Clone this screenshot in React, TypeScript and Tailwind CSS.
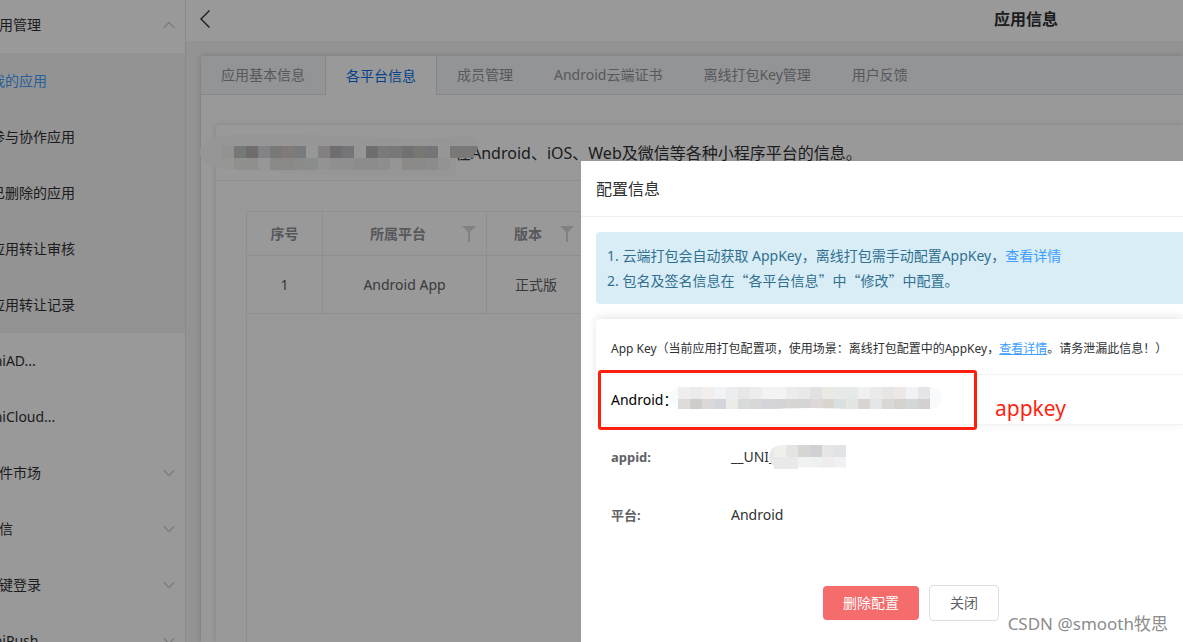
import { ChevronDown, ChevronUp } from "lucide-react"

const subItems = ["我的应用", "参与协作应用", "已删除的应用", "应用转让审核", "应用转让记录"]

const menuItems = [
  { label: "uniAD...", arrow: false },
  { label: "uniCloud...", arrow: false },
  { label: "插件市场", arrow: true },
  { label: "短信", arrow: true },
  { label: "一键登录", arrow: true },
  { label: "uniPush", arrow: true },
]

const tabs = ["应用基本信息", "各平台信息", "成员管理", "Android云端证书", "离线打包Key管理", "用户反馈"]

const nameTop = ["#f4f4f0", "#c2c8c6", "#b9b6b3", "#d8dbe0", "#c8c8c6", "#d6ccc8", "#c6ced3", "#fafcfc", "#dcd6d6", "#b8b8bc", "#c4c4c8", "#fafafa", "#b8b8bc", "#ccccce", "#c8c8c5", "#bcbcc0", "#c8c6c0", "#c0c3c6", "#fafafa", "#ccc8c6", "#c8c8c5"]
const nameBottom = ["#fafaf9", "#f0f0ee", "#eeeeec", "#fafafa", "#e4e4e2", "#e6e5e3", "#e8e9e6", "#e8eae9", "#f6f6f6", "#eeeeee", "#eeeeee", "#e9e9e9", "#e9eae8", "#eceeee", "#f8f8f8", "#e8e7e5", "#e6e7e5", "#eaeaea", "#f5f5f5"]

const keyTop = ["#efedee", "#ecebec", "#f2eeeb", "#f1f3f6", "#ecedee", "#e7e8e6", "#ebeeec", "#f4f3f2", "#f4f3f3", "#ececed", "#e9e9eb", "#e3e0e1", "#ebe9e3", "#e5e9e8", "#e5e9e8", "#f0f0f0", "#e9ebea", "#e7e6e4", "#ede8e6", "#f0f2f5", "#e5e5e8"]
const keyBottom = ["#dedcdb", "#cfcccb", "#dcdad8", "#d4d4dc", "#ebebe8", "#d8dbd9", "#d8d8d8", "#d4d5d8", "#d4d4d6", "#d7d6d3", "#d5d5d8", "#dfd8da", "#d8d6cf", "#dae0e0", "#e4e6e2", "#d7d6d2", "#e5e6e9", "#d9d8d4", "#d4d2ce", "#d5d6d8", "#d2d0d1"]

const idTop = ["#f0f0ec", "#e4e5e3", "#d6d6d5", "#d0d1d2", "#e6e6e7", "#e2e3e6"]
const idBottom = ["#e9e9e9", "#e9e9e9", "#f0f1f1", "#eff0f0", "#eeecec", "#f0f1f4"]

const Mosaic = ({ rows, x, y }: { rows: string[][]; x: number; y: number }) => (
  <>
    {rows.map((row, r) =>
      row.map((fill, i) => <rect key={`${r}-${i}`} x={x + i * 12} y={y + r * 12} width="12" height="12" fill={fill} />)
    )}
  </>
)

const FilterIcon = () => (
  <svg viewBox="0 0 14 16" className="h-4 w-3.5" fill="#d8d8d8">
    <path d="M0 0h14L8 6v10H6V6z" />
  </svg>
)

const Sidebar = () => (
  <aside className="-mt-[3px] -ml-[35px] w-[221px] shrink-0 border-r border-[#e6e6e6] bg-white text-sm text-[#303133]">
    <div className="flex h-14 items-center justify-between pr-1.5 pl-5">
      应用管理
      <ChevronUp className="size-5 text-[#a0a3a9]" strokeWidth={1.2} />
    </div>
    <nav className="bg-[#f5f5f5]">
      {subItems.map((item, i) => (
        <a key={item} href="#" className={`flex h-14 items-center pl-[26px] ${i === 0 ? "text-[#409eff]" : ""}`}>
          {item}
        </a>
      ))}
    </nav>
    {menuItems.map((item) => (
      <div key={item.label} className="flex h-14 items-center justify-between pr-1.5 pl-5">
        {item.label}
        {item.arrow && <ChevronDown className="size-5 text-[#a0a3a9]" strokeWidth={1.2} />}
      </div>
    ))}
  </aside>
)

const PlatformTable = () => (
  <div className="grow border-t border-l border-[#ebeef5]">
    <table className="w-full table-fixed border-separate border-spacing-0 text-center text-sm text-[#606266]">
      <thead className="text-[#909399]">
        <tr className="h-11">
          <th className="w-[76px] border-r border-b border-[#ebeef5]">序号</th>
          <th className="w-[164px] border-r border-b border-[#ebeef5]">
            <div className="flex items-center justify-end gap-9 pr-2.5">
              所属平台 <FilterIcon />
            </div>
          </th>
          <th className="w-[99px] border-r border-b border-[#ebeef5]">
            <div className="flex items-center justify-end gap-[18px] pr-[11px]">
              版本 <FilterIcon />
            </div>
          </th>
          <th className="border-b border-[#ebeef5]"></th>
        </tr>
      </thead>
      <tbody>
        <tr className="h-[58px]">
          <td className="border-r border-b border-[#ebeef5]">1</td>
          <td className="border-r border-b border-[#ebeef5]">Android App</td>
          <td className="border-r border-b border-[#ebeef5]">正式版</td>
          <td className="border-b border-[#ebeef5]"></td>
        </tr>
      </tbody>
    </table>
  </div>
)

const ConfigDialog = () => (
  <section role="dialog" aria-label="配置信息" className="absolute top-[161px] right-0 bottom-0 left-[581px] overflow-hidden bg-white text-sm text-[#303133]">
    <h2 className="flex h-14 items-center border-b border-[#f0f0f0] pl-[15px] text-base">配置信息</h2>
    <div className="pt-[15px] pl-[15px]">
      <div className="rounded-l bg-[#d9edf7] p-[11px] leading-[25px] text-[#31708f]">
        <p>
          1. 云端打包会自动获取 AppKey，离线打包需手动配置AppKey，
          <a href="#" className="text-[#409eff]">查看详情</a>
        </p>
        <p>
          2. 包名及签名信息在<span className="font-['Noto_Sans_CJK_SC',sans-serif]">“</span>各平台信息
          <span className="font-['Noto_Sans_CJK_SC',sans-serif]">”</span>中
          <span className="font-['Noto_Sans_CJK_SC',sans-serif]">“</span>修改
          <span className="font-['Noto_Sans_CJK_SC',sans-serif]">”</span>中配置。
        </p>
      </div>

      <div className="relative mt-[15px] rounded-l shadow-[0_-2px_8px_rgba(0,0,0,0.1)]">
        <div className="flex h-14 items-center border-b border-[#f3f3f3] pt-1 pl-[15px] text-xs">
          <p className="whitespace-nowrap">
            App Key（当前应用打包配置项，使用场景：离线打包配置中的AppKey，
            <a href="#" className="text-[#409eff] underline">查看详情</a>。请务泄漏此信息！）
          </p>
        </div>
        <div className="flex h-[50px] items-center border-b border-[#f3f3f3] pl-[15px] text-black">
          Android：
          <svg viewBox="0 0 272 26" className="-ml-[7px] h-[26px] w-[272px]">
            <rect x="0" y="0" width="272" height="22" rx="11" fill="#f9fafc" />
            <Mosaic rows={[keyTop, keyBottom]} x={8} y={0} />
            <path d="M86 26v-3q50-4 110 0h18v-1h46v4z" fill="#fff" />
            <path d="M0 22h272v4H0z" fill="#fff" />
          </svg>
        </div>
        {/* highlight frame and its note */}
        <div className="absolute top-[51px] left-0.5 h-[60px] w-[379px] rounded-[3px] border-3 border-[#ff1f11]"></div>
        <span className="absolute top-[73px] left-[399px] text-[21px] leading-8 text-[#ff1f11]">appkey</span>
      </div>

      <dl className="grid grid-cols-[120px_1fr] pt-[3px] pl-[15px] leading-[58px]">
        <dt className="text-[13px] font-bold text-[#606266]">appid:</dt>
        <dd className="flex items-center">
          __UNI_
          <svg viewBox="0 0 78 24" className="-ml-[7px] h-6 w-[78px]">
            <Mosaic rows={[idTop, idBottom]} x={6} y={0} />
            <path d="M12 0C4 0 1 5 1 11C1 19 7 24 15 24C22 24 26 23 30 22V12H6V4z" fill="#e9e9e9" />
            <path d="M0 0h12Q3 2 1 10H0zM30 22.500h48V24H30z" fill="#fff" />
          </svg>
        </dd>
        <dt className="text-[13px] font-bold text-[#606266]">平台:</dt>
        <dd>Android</dd>
      </dl>

      <div className="flex items-center gap-2.5 pt-[41px] pl-[227px]">
        <button className="h-[34px] w-24 rounded bg-[#f56c6c] text-white">删除配置</button>
        <button className="h-9 w-[70px] rounded border border-[#dcdfe6] text-[#606266]">关闭</button>
      </div>
    </div>
    <span className="absolute right-[15px] bottom-1.5 text-[17px] leading-6 text-[#8c8c8c]">CSDN @smooth牧思</span>
  </section>
)

const App = () => {
  return (
    <div className="relative flex h-screen overflow-hidden bg-[#f5f5f5] font-['Noto_Sans','Noto_Sans_CJK_SC',sans-serif]">
      <Sidebar />

      <main className="flex min-w-0 grow flex-col">
        <header className="flex h-[41px] shrink-0 items-center justify-between bg-white pr-[125px] pb-1 pl-3.5 text-[#303133]">
          <button aria-label="返回">
            <svg viewBox="0 0 10 18" className="h-[18px] w-2.5" fill="none" stroke="currentColor" strokeWidth="1.4">
              <path d="M9.500 .5L1 9l8.500 8.500" />
            </svg>
          </button>
          <h1 className="text-base font-bold">应用信息</h1>
        </header>

        <div className="mt-[15px] ml-[15px] flex grow flex-col bg-white shadow-[0_0_6px_rgba(0,0,0,0.2)]">
          <div className="flex h-[39px] shrink-0 border-b border-[#dcdfe6] bg-[#f5f7fa] text-sm">
            {tabs.map((tab, i) => (
              <button
                key={tab}
                className={
                  i === 1
                    ? "-mb-px border-r border-[#dcdfe6] bg-white px-5 text-[#0a6fe8]"
                    : i === 0
                      ? "border-r border-[#dcdfe6] px-5 text-[#909399]"
                      : "border-r border-transparent px-5 text-[#909399]"
                }
              >
                {tab}
              </button>
            ))}
          </div>

          <div className="mt-[30px] ml-[15px] flex grow flex-col rounded-tl shadow-[0_0_6px_rgba(0,0,0,0.15)]">
            <div className="relative h-14 shrink-0 border-b border-[#ebeef5] pl-[239px] leading-[56px] text-[#303133]">
              在Android、iOS、Web及微信等各种小程序平台的信息。
              <svg viewBox="0 0 290 50" className="absolute top-1.5 -left-[18px] h-[50px] w-[290px]">
                <path d="M20 5C90 -2 190 12 270 5c12 2 10 8 4 12l-16 10v18H150C100 44 60 40 20 36C-4 32 -4 12 20 5z" fill="#fafafa" />
                <Mosaic rows={[nameTop, nameBottom]} x={24} y={15} />
                <path d="M276 15h4q0 6-6 9z" fill="#c8c8c5" />
              </svg>
            </div>
            <div className="flex grow flex-col pt-[30px] pl-[30px]">
              <PlatformTable />
            </div>
          </div>
        </div>
      </main>

      <div className="absolute inset-0 bg-black/40"></div>
      <ConfigDialog />
    </div>
  )
}

export default App
